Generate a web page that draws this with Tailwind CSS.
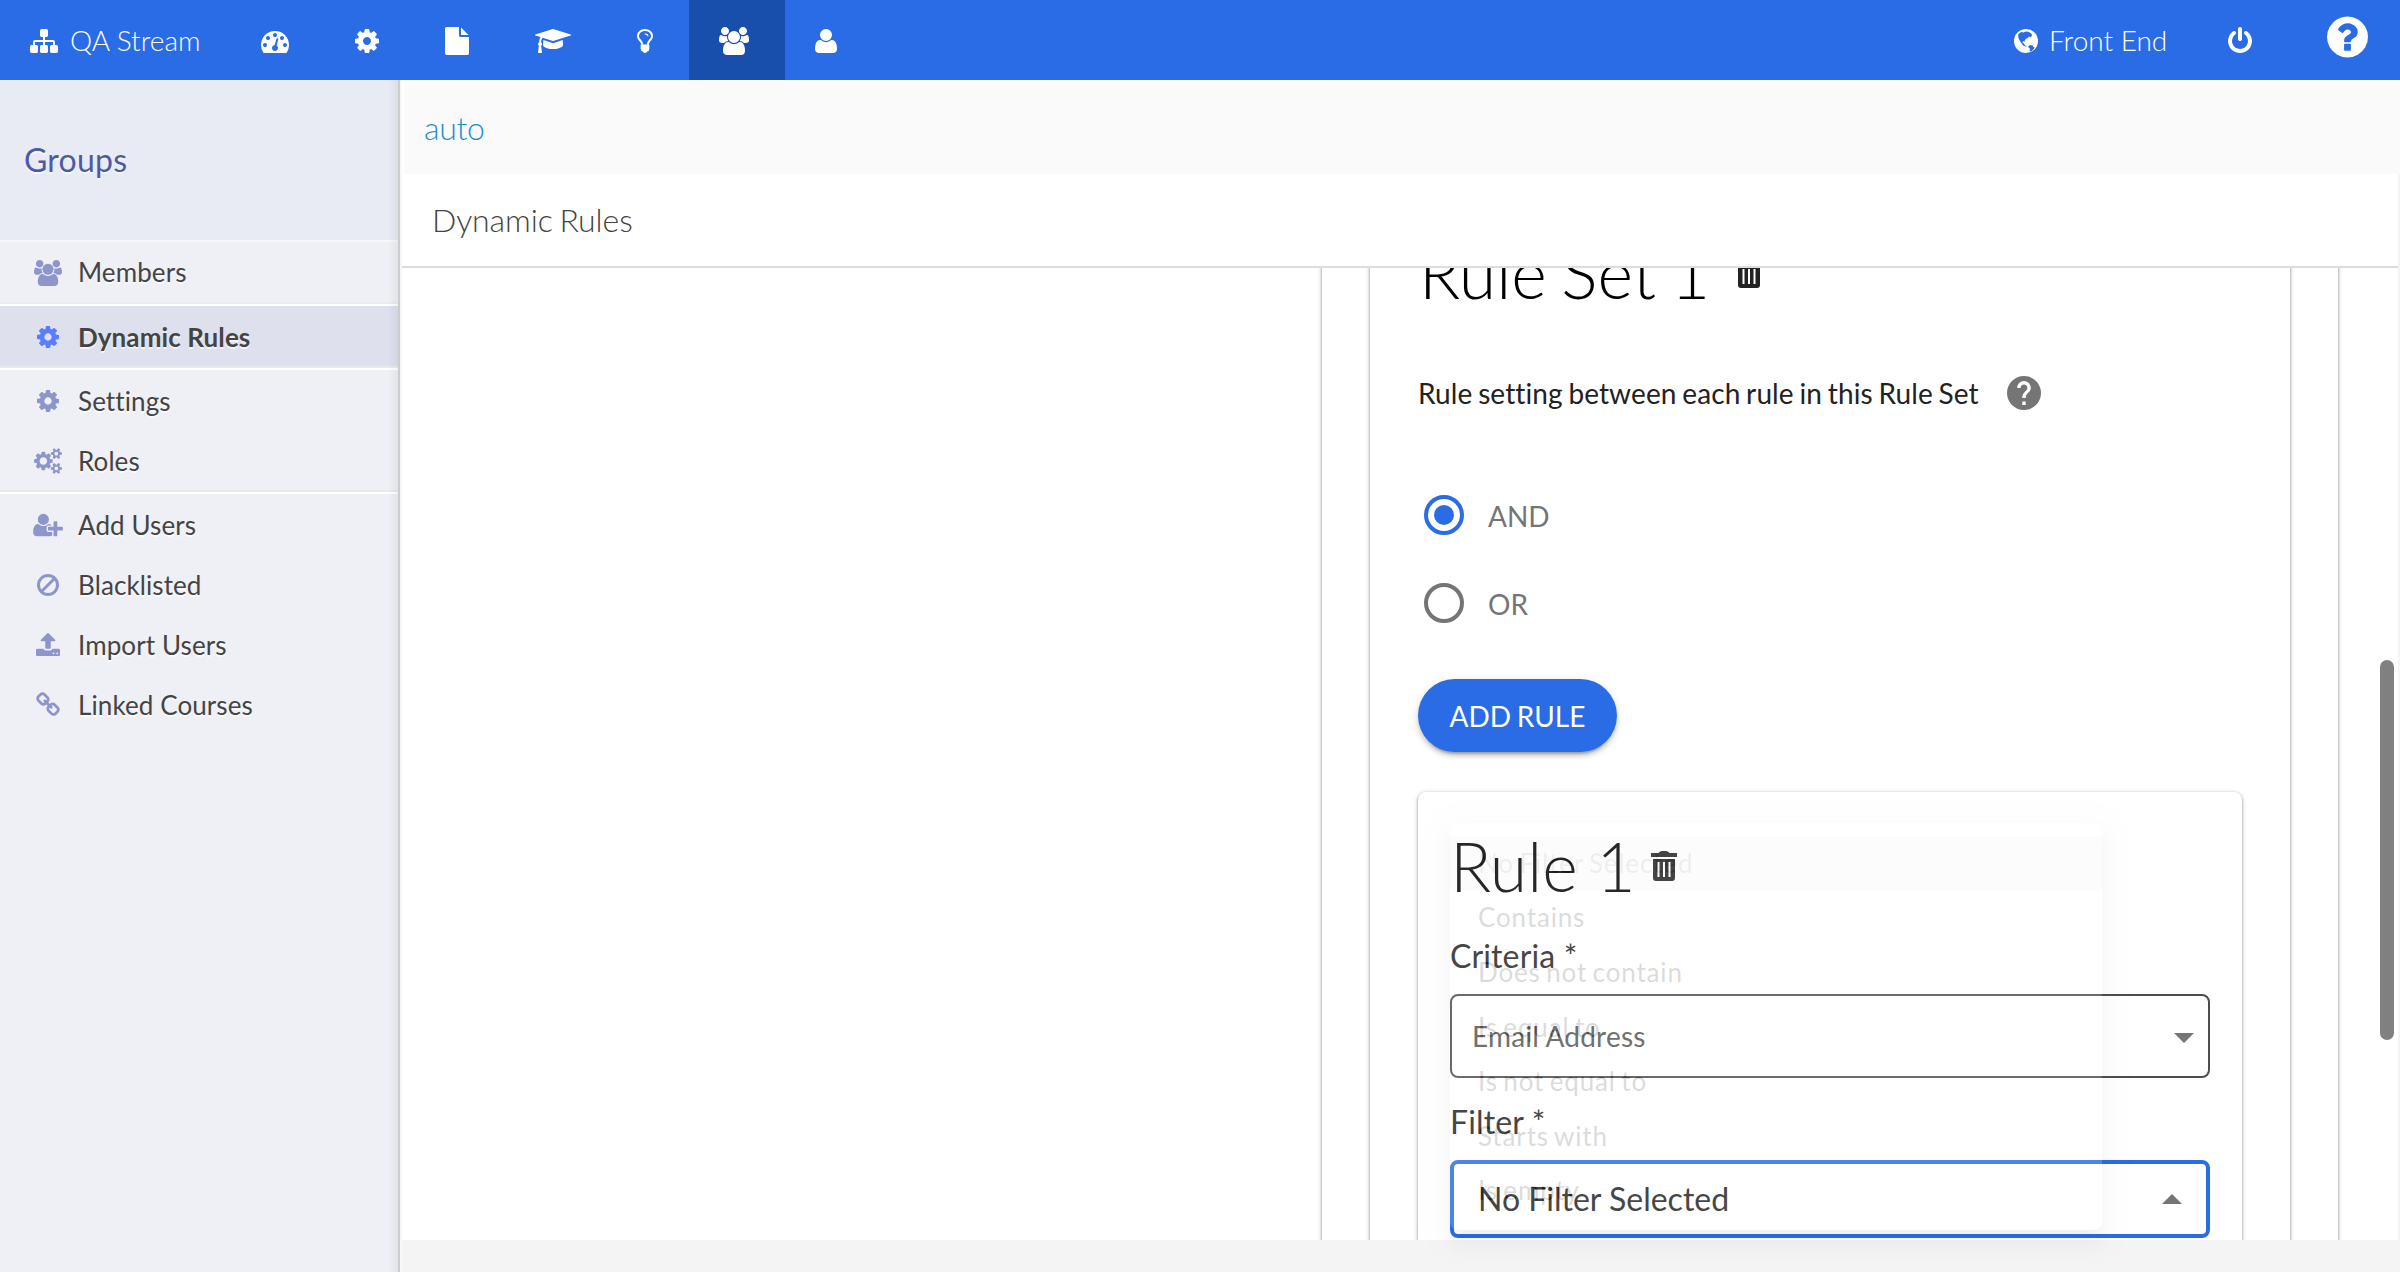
<!DOCTYPE html>
<html lang="en">
<head>
<meta charset="utf-8">
<title>Dynamic Rules</title>
<script src="https://cdn.jsdelivr.net/npm/@tailwindcss/browser@4"></script>
</head>
<body class="w-[2400px] h-[1272px] overflow-hidden bg-[#f4f4f4] font-['Lato',sans-serif] text-[#444] [font-variant-ligatures:none]">
<svg class="hidden">
  <symbol id="cog" viewBox="128 0 1536 1792"><path d="M1152 896q0-106-75-181t-181-75-181 75-75 181 75 181 181 75 181-75 75-181zm512-109v222q0 12-8 23t-20 13l-185 28q-19 54-39 91 35 50 107 138 10 12 10 25t-9 23q-27 37-99 108t-94 71q-12 0-26-9l-138-108q-44 23-91 38-16 136-29 186-7 28-36 28h-222q-14 0-24.500-8.500t-11.500-21.500l-28-184q-49-16-90-37l-141 107q-10 9-25 9-14 0-25-11-126-114-165-168-7-10-7-23 0-12 8-23 15-21 51-66.500t54-70.500q-27-50-41-99l-183-27q-13-2-21-12.500t-8-23.500v-222q0-12 8-23t19-13l186-28q14-46 39-92-40-57-107-138-10-12-10-24 0-10 9-23 26-36 98.500-107.500t94.500-71.500q13 0 26 10l138 107q44-23 91-38 16-136 29-186 7-28 36-28h222q14 0 24.500 8.500t11.500 21.500l28 184q49 16 90 37l142-107q9-9 24-9 13 0 25 10 129 119 165 170 7 8 7 22 0 12-8 23-15 21-51 66.500t-54 70.500q26 50 41 98l183 28q13 2 21 12.500t8 23.500z"/></symbol>
  <symbol id="users" viewBox="-64 0 1920 1792"><path d="M529 896q-162 5-265 128h-134q-82 0-138-40.500t-56-118.500q0-353 124-353 6 0 43.500 21t97.500 42.500 119 21.500q67 0 133-23-5 37-5 66 0 139 81 256zm1071 637q0 120-73 189.500t-194 69.500h-874q-121 0-194-69.500t-73-189.500q0-53 3.500-103.500t14-109 26.500-108.500 43-97.500 62-81 85.500-53.500 111.500-20q10 0 43 21.500t73 48 107 48 135 21.500 135-21.500 107-48 73-48 43-21.500q61 0 111.500 20t85.500 53.500 62 81 43 97.500 26.500 108.500 14 109 3.500 103.500zm-1024-1277q0 106-75 181t-181 75-181-75-75-181 75-181 181-75 181 75 75 181zm704 384q0 159-112.500 271.500t-271.500 112.500-271.500-112.500-112.500-271.500 112.500-271.500 271.500-112.500 271.500 112.500 112.500 271.500zm576 225q0 78-56 118.500t-138 40.500h-134q-103-123-265-128 81-117 81-256 0-29-5-66 66 23 133 23 59 0 119-21.500t97.500-42.500 43.500-21q124 0 124 353zm-128-609q0 106-75 181t-181 75-181-75-75-181 75-181 181-75 181 75 75 181z"/></symbol>
</svg>

<div class="flex h-full flex-col">
  <!-- top bar -->
  <header class="flex h-20 shrink-0 items-center justify-between bg-[#2a6ce6] text-[28px] font-light text-white">
    <nav class="flex h-full items-stretch">
      <a class="flex w-[231px] items-center gap-3 pl-[30px] pt-[2px]">
        <svg class="h-7 w-7 fill-current" viewBox="0 0 1792 1792"><path d="M1792 1248v320q0 40-28 68t-68 28h-320q-40 0-68-28t-28-68v-320q0-40 28-68t68-28h96v-192h-512v192h96q40 0 68 28t28 68v320q0 40-28 68t-68 28h-320q-40 0-68-28t-28-68v-320q0-40 28-68t68-28h96v-192h-512v192h96q40 0 68 28t28 68v320q0 40-28 68t-68 28h-320q-40 0-68-28t-28-68v-320q0-40 28-68t68-28h96v-192q0-52 38-90t90-38h512v-192h-96q-40 0-68-28t-28-68v-320q0-40 28-68t68-28h320q40 0 68 28t28 68v320q0 40-28 68t-68 28h-96v192h512q52 0 90 38t38 90v192h96q40 0 68 28t28 68z"/></svg>
        <span class="-mt-[3px] whitespace-nowrap">QA Stream</span>
      </a>
      <a class="flex items-center pl-[30px] pr-9 pt-[2px]"><svg class="h-7 w-7 fill-current" viewBox="0 0 1792 1792"><path d="M384 1152q0-53-37.500-90.500t-90.500-37.500-90.500 37.500-37.500 90.500 37.500 90.500 90.500 37.500 90.500-37.500 37.500-90.500zm192-448q0-53-37.500-90.500t-90.500-37.500-90.500 37.500-37.500 90.500 37.500 90.500 90.500 37.500 90.500-37.500 37.500-90.500zm428 481l101-382q6-26-7.500-48.500t-38.500-29.500-48 6.500-30 39.500l-101 382q-60 5-107 43.500t-63 98.500q-20 77 20 146t117 89 146-20 89-117q16-60-6-117t-72-91zm660-33q0-53-37.500-90.500t-90.500-37.500-90.500 37.500-37.500 90.500 37.500 90.500 90.500 37.500 90.500-37.500 37.500-90.500zm-640-640q0-53-37.500-90.500t-90.500-37.500-90.500 37.500-37.500 90.500 37.500 90.500 90.500 37.500 90.500-37.500 37.500-90.500zm448 192q0-53-37.500-90.500t-90.500-37.500-90.500 37.500-37.500 90.500 37.500 90.500 90.500 37.500 90.500-37.500 37.500-90.500zm320 448q0 261-141 483-19 29-54 29h-1402q-35 0-54-29-141-221-141-483 0-182 71-348t191-286 286-191 348-71 348 71 286 191 191 286 71 348z"/></svg></a>
      <a class="flex items-center pl-[30px] pr-9 pt-[2px]"><svg class="h-7 w-6 fill-current"><use href="#cog"/></svg></a>
      <a class="flex items-center pl-[30px] pr-9 pt-[2px]"><svg class="h-7 w-6 fill-current" viewBox="128 0 1536 1792"><path d="M1152 512v-472q22 14 36 28l408 408q14 14 28 36h-472zm-128 32q0 40 28 68t68 28h544v1056q0 40-28 68t-68 28h-1344q-40 0-68-28t-28-68v-1600q0-40 28-68t68-28h800v544z"/></svg></a>
      <a class="flex items-center pl-[30px] pr-9 pt-[2px]"><svg class="h-7 w-9 fill-current" viewBox="0 0 2304 1792"><path d="M1774 836l18 316q4 69-82 128t-235 93.500-323 34.500-323-34.500-235-93.500-82-128l18-316 574 181q22 7 48 7t48-7zm530-324q0 23-22 31l-1120 352q-4 1-10 1t-10-1l-652-206q-43 34-71 111.500t-34 178.500q63 36 63 109 0 69-58 107l58 433q2 14-8 25-9 11-24 11h-192q-15 0-24-11-10-11-8-25l58-433q-58-38-58-107 0-73 65-111 11-207 98-330l-333-104q-22-8-22-31t22-31l1120-352q4-1 10-1t10 1l1120 352q22 8 22 31z"/></svg></a>
      <a class="flex items-center pl-[30px] pr-9 pt-[2px]"><svg class="h-7 w-4 fill-current" viewBox="384 0 1024 1792"><path d="M1120 576q0 13-9.500 22.500t-22.500 9.500-22.500-9.500-9.500-22.500q0-46-54-71t-106-25q-13 0-22.500-9.500t-9.500-22.500 9.500-22.500 22.500-9.500q50 0 99.500 16t87 54 37.500 90zm160 0q0-72-34.500-134t-90-101.500-123-62-136.500-22.500-136.500 22.500-123 62-90 101.500-34.500 134q0 101 68 180 10 11 30.500 33t30.500 33q128 153 141 298h228q13-145 141-298 10-11 30.500-33t30.500-33q68-79 68-180zm128 0q0 155-103 268-45 49-74.500 87t-59.500 95.500-34 107.500q47 28 47 82 0 37-25 64 25 27 25 64 0 52-45 81 13 23 13 47 0 46-31.500 71t-77.500 25q-20 44-60 70t-87 26-87-26-60-70q-46 0-77.500-25t-31.500-71q0-24 13-47-45-29-45-81 0-37 25-64-25-27-25-64 0-54 47-82-4-50-34-107.500t-59.500-95.500-74.500-87q-103-113-103-268 0-99 44.500-184.500t117-142 164-89 186.500-32.500 186.500 32.500 164 89 117 142 44.500 184.500z"/></svg></a>
      <a class="flex items-center bg-[#184eac] pl-[30px] pr-9 pt-[2px]"><svg class="h-7 w-[30px] fill-current"><use href="#users"/></svg></a>
      <a class="flex items-center pl-[30px] pr-9 pt-[2px]"><svg class="h-7 w-[22px] fill-current" viewBox="192 0 1408 1792"><path d="M1600 1405q0 120-73 189.500t-194 69.500h-874q-121 0-194-69.500t-73-189.500q0-53 3.500-103.500t14-109 26.500-108.500 43-97.500 62-81 85.500-53.500 111.500-20q9 0 42 21.500t74.500 48 108 48 133.500 21.500 133.500-21.500 108-48 74.500-48 42-21.500q61 0 111.500 20t85.500 53.500 62 81 43 97.500 26.500 108.500 14 109 3.500 103.500zm-320-893q0 159-112.500 271.500t-271.500 112.500-271.500-112.500-112.500-271.500 112.500-271.500 271.500-112.500 271.500 112.500 112.500 271.500z"/></svg></a>
    </nav>
    <div class="flex items-center pr-8">
      <a class="flex w-[214px] items-center gap-[11px] pt-[2px]">
        <svg class="h-6 w-6 shrink-0" viewBox="0 0 24 24"><circle cx="12" cy="12" r="12" fill="#fff"/><path fill="#2a6ce6" d="M4.300 5.200 7 3l2.400.4 2-1 3.200.4 2.600 1.600 1 1.800-1.600 2-1.800-.8-.8 1.600-2 .8-1.400 1.600.4 1.400-1.800-.6-.8 1.400 1.600 1 1 1.800 1.600.6-.4.800-2.800-1-1.800-2.200-1.600-2.600L4.400 9zM14.300 17l1.900-1 2.600.6.2 1.200 1.600.4-1 2-2.600 2.200-1.400-.4.400-2.200-1.500-1.200z"/></svg>
        <span class="-mt-[3px] whitespace-nowrap">Front End</span>
      </a>
      <a class="w-[99px] pt-[2px]"><svg class="h-7 w-6 fill-current" viewBox="128 0 1536 1792"><path d="M1664 896q0 156-61 298t-164 245-245 164-298 61-298-61-245-164-164-245-61-298q0-182 80.500-343t226.500-270q43-32 95.500-25t83.500 50q32 42 24.500 94.500t-49.500 84.500q-98 74-151.500 181t-53.500 228q0 104 40.500 198.500t109.500 163.500 163.500 109.500 198.500 40.500 198.500-40.500 163.500-109.500 109.500-163.500 40.500-198.500q0-121-53.500-228t-151.500-181q-42-32-49.500-84.500t24.500-94.500q31-43 84-50t95 25q146 109 226.500 270t80.500 343zm-640-768v640q0 52-38 90t-90 38-90-38-38-90v-640q0-52 38-90t90-38 90 38 38 90z"/></svg></a>
      <a class="-mt-[7px]"><svg class="h-12 w-[41px] fill-current" viewBox="128 0 1536 1792"><path d="M1024 1376v-192q0-14-9-23t-23-9h-192q-14 0-23 9t-9 23v192q0 14 9 23t23 9h192q14 0 23-9t9-23zm256-672q0-88-55.500-163t-138.500-116-170-41q-243 0-371 213-15 24 8 42l132 100q7 6 19 6 16 0 25-12 53-68 86-92 34-24 86-24 48 0 85.500 26t37.500 59q0 38-20 61t-68 45q-63 28-115.500 86.500t-52.500 125.500v36q0 14 9 23t23 9h192q14 0 23-9t9-23q0-19 21.500-49.500t54.500-49.500q32-18 49-28.500t46-35 44.500-48 28-60.500 12.500-81zm384 192q0 209-103 385.500t-279.500 279.500-385.500 103-385.500-103-279.500-279.500-103-385.500 103-385.500 279.500-279.500 385.500-103 385.500 103 279.500 279.500 103 385.500z"/></svg></a>
    </div>
  </header>

  <div class="flex min-h-0 flex-1">
    <!-- sidebar -->
    <aside class="relative w-[400px] shrink-0 border-r-2 border-[#ccc] bg-[#eff0f5] text-[26px] tracking-[0.1px] [text-shadow:0_2px_0_#ffffffa0]">
      <div class="flex h-[162px] items-center border-b-2 border-[#f6f7fb] bg-[#e8ebf4] pl-6 text-[32px] tracking-[0.25px] text-[#4c5aa5]">Groups</div>
      <ul>
        <li class="flex h-[62px] items-center border-b-2 border-[#ebebee] pt-px"><span class="flex w-[78px] justify-center pl-[18px]"><svg class="h-[26px] w-7 fill-[#8d96ca]"><use href="#users"/></svg></span>Members</li>
        <li class="flex h-16 items-center border-y-2 border-t-white border-b-[#eaeaec] bg-[#dee1ed] pt-[2px] font-bold"><span class="flex w-[78px] justify-center pl-[18px]"><svg class="h-[26px] w-[22px] fill-[#5a7cff]"><use href="#cog"/></svg></span>Dynamic Rules</li>
        <li class="flex h-[62px] items-center border-t-2 border-white pt-[2px]"><span class="flex w-[78px] justify-center pl-[18px]"><svg class="h-[26px] w-[22px] fill-[#8d96ca]"><use href="#cog"/></svg></span>Settings</li>
        <li class="flex h-[62px] items-center border-b-2 border-[#eaeaec] pt-[2px]"><span class="flex w-[78px] justify-center pl-[18px]"><svg class="h-[26px] w-7 fill-[#8d96ca]" viewBox="-64 0 1920 1792"><path d="M832 896q0-106-75-181t-181-75-181 75-75 181 75 181 181 75 181-75 75-181zm768 512q0-52-38-90t-90-38-90 38-38 90q0 53 37.500 90.500t90.500 37.500 90.500-37.500 37.500-90.500zm0-1024q0-52-38-90t-90-38-90 38-38 90q0 53 37.500 90.500t90.500 37.500 90.500-37.500 37.500-90.500zm-384 421v185q0 10-7 19.500t-16 10.500l-155 24q-11 35-32 76 34 48 90 115 7 10 7 20 0 12-7 19-23 30-82.500 89.500t-78.500 59.500q-11 0-21-7l-115-90q-37 19-77 31-11 108-23 155-7 24-30 24h-186q-11 0-20-7.500t-10-17.500l-23-153q-34-10-75-31l-118 89q-7 7-20 7-11 0-21-8-144-133-144-160 0-9 7-19 10-14 41-53t47-61q-23-44-35-82l-152-24q-10-1-17-9.500t-7-19.500v-185q0-10 7-19.500t16-10.500l155-24q11-35 32-76-34-48-90-115-7-11-7-20 0-12 7-20 22-30 82-89t79-59q11 0 21 7l115 90q34-18 77-32 11-108 23-154 7-24 30-24h186q11 0 20 7.500t10 17.500l23 153q34 10 75 31l118-89q8-7 20-7 11 0 21 8 144 133 144 160 0 9-7 19-12 16-42 54t-45 60q23 48 34 82l152 23q10 2 17 10.500t7 19.500zm640 533v140q0 16-149 31-12 27-30 52 51 113 51 138 0 4-4 7-122 71-124 71-8 0-46-47t-52-68q-20 2-30 2t-30-2q-14 21-52 68t-46 47q-2 0-124-71-4-3-4-7 0-25 51-138-18-25-30-52-149-15-149-31v-140q0-16 149-31 13-29 30-52-51-113-51-138 0-4 4-7 4-2 35-20t59-34 30-16q8 0 46 46.500t52 67.500q20-2 30-2t30 2q51-71 92-112l6-2q4 0 124 70 4 3 4 7 0 25-51 138 17 23 30 52 149 15 149 31zm0-1024v140q0 16-149 31-12 27-30 52 51 113 51 138 0 4-4 7-122 71-124 71-8 0-46-47t-52-68q-20 2-30 2t-30-2q-14 21-52 68t-46 47q-2 0-124-71-4-3-4-7 0-25 51-138-18-25-30-52-149-15-149-31v-140q0-16 149-31 13-29 30-52-51-113-51-138 0-4 4-7 4-2 35-20t59-34 30-16q8 0 46 46.500t52 67.500q20-2 30-2t30 2q51-71 92-112l6-2q4 0 124 70 4 3 4 7 0 25-51 138 17 23 30 52 149 15 149 31z"/></svg></span>Roles</li>
        <li class="flex h-[62px] items-center border-t-2 border-white pt-[2px]"><span class="flex w-[78px] justify-center pl-[18px]"><svg class="h-[26px] w-[30px] fill-[#8d96ca]" viewBox="0 0 2048 1792"><path d="M704 896q-159 0-271.500-112.500t-112.500-271.500 112.500-271.500 271.500-112.500 271.500 112.500 112.500 271.500-112.500 271.500-271.500 112.500zm960 128h352q13 0 22.500 9.500t9.500 22.500v192q0 13-9.500 22.500t-22.500 9.500h-352v352q0 13-9.500 22.500t-22.500 9.500h-192q-13 0-22.500-9.500t-9.500-22.500v-352h-352q-13 0-22.500-9.500t-9.500-22.500v-192q0-13 9.500-22.500t22.500-9.500h352v-352q0-13 9.500-22.500t22.500-9.500h192q13 0 22.500 9.500t9.500 22.500v352zm-736 224q0 52 38 90t90 38h256v238q-68 50-171 50h-874q-121 0-194-69t-73-190q0-53 3.500-103.500t14-109 26.500-108.500 43-97.500 62-81 85.500-53.500 111.500-20q19 0 39 17 79 61 154.500 91.500t164.500 30.500 164.500-30.500 154.500-91.500q20-17 39-17 132 0 217 96h-223q-52 0-90 38t-38 90v192z"/></svg></span>Add Users</li>
        <li class="flex h-[60px] items-center pt-[2px]"><span class="flex w-[78px] justify-center pl-[18px]"><svg class="h-[22px] w-[22px] fill-none stroke-[#8d96ca] stroke-3" viewBox="0 0 22 22"><circle cx="11" cy="11" r="9.500"/><path d="M17.500 4.500l-13 13"/></svg></span>Blacklisted</li>
        <li class="flex h-[60px] items-center pt-[2px]"><span class="flex w-[78px] justify-center pl-[18px]"><svg class="h-[26px] w-6 fill-[#8d96ca]" viewBox="64 0 1664 1792"><path d="M1344 1472q0-26-19-45t-45-19-45 19-19 45 19 45 45 19 45-19 19-45zm256 0q0-26-19-45t-45-19-45 19-19 45 19 45 45 19 45-19 19-45zm128-224v320q0 40-28 68t-68 28h-1472q-40 0-68-28t-28-68v-320q0-40 28-68t68-28h427q21 56 70.500 92t110.500 36h256q61 0 110.500-36t70.500-92h427q40 0 68 28t28 68zm-325-648q-17 40-59 40h-256v448q0 26-19 45t-45 19h-256q-26 0-45-19t-19-45v-448h-256q-42 0-59-40-17-39 14-69l448-448q18-19 45-19t45 19l448 448q31 30 14 69z"/></svg></span>Import Users</li>
        <li class="flex h-[60px] items-center pt-[2px]"><span class="flex w-[78px] justify-center pl-[18px]"><svg class="h-[26px] w-6 fill-[#8d96ca]" viewBox="64 0 1664 1792"><path d="M1520 1216q0-40-28-68l-208-208q-28-28-68-28-42 0-72 32 3 3 19 18.500t21.500 21.500 15 19 13 25.500 3.500 27.500q0 40-28 68t-68 28q-15 0-27.500-3.500t-25.500-13-19-15-21.500-21.500-18.500-19q-33 31-33 73 0 40 28 68l206 207q27 27 68 27 40 0 68-26l147-146q28-28 28-67zm-703-705q0-40-28-68l-206-207q-28-28-68-28-39 0-68 27l-147 146q-28 28-28 67 0 40 28 68l208 208q27 27 68 27 42 0 72-31-3-3-19-18.500t-21.500-21.500-15-19-13-25.500-3.500-27.500q0-40 28-68t68-28q15 0 27.500 3.500t25.500 13 19 15 21.500 21.500 18.500 19q33-31 33-73zm895 705q0 120-85 203l-147 146q-83 83-203 83-121 0-204-85l-206-207q-83-83-83-203 0-123 88-209l-88-88q-86 88-208 88-120 0-204-84l-208-208q-84-84-84-204t85-203l147-146q83-83 203-83 121 0 204 85l206 207q83 83 83 203 0 123-88 209l88 88q86-88 208-88 120 0 204 84l208 208q84 84 84 204z"/></svg></span>Linked Courses</li>
      </ul>
      <div class="absolute inset-y-0 right-0 w-2.5 bg-gradient-to-r from-transparent to-black/5"></div>
    </aside>

    <!-- main column -->
    <main class="flex min-w-0 flex-1 flex-col border-l-2 border-[#f7f7f7]">
      <div class="flex h-[94px] shrink-0 items-center border-l-2 border-white bg-[#fafafa] pl-5 pt-[2px] text-[32px] font-light tracking-[-0.3px] text-[#1e8fcb]">auto</div>
      <div class="mr-[2px] flex h-[94px] shrink-0 items-center border-b-2 border-[#ddd] bg-white pl-[30px] text-[32px] font-light tracking-[-0.1px] [word-spacing:-1.8px]">Dynamic Rules</div>
      <div class="mr-[2px] h-[972px] overflow-hidden bg-white pl-[920px] pr-[60px]">
        <section class="h-[1100px] px-12 shadow-[0_1px_1px_#00000024,0_1px_6px_#0000001f,0_1px_3px_#00000060]">
          <section class="h-[1100px] px-12 shadow-[0_1px_1px_#00000024,0_1px_6px_#0000001f,0_1px_3px_#00000060]">
            <div class="-mt-[35px] flex h-20 items-center pl-px">
              <h1 class="w-[317px] whitespace-nowrap text-[68px] font-light leading-[80px] text-black [word-spacing:-3.8px]">Rule Set 1</h1>
              <svg class="-mt-px h-[30px] w-[26px] fill-[#222]" viewBox="0 0 26 30"><path fill-rule="evenodd" d="M0 2h7.500Q9 0 11 0h4q2 0 3.500 2H26v4H0zM2 8h22v19q0 3-3 3H5q-3 0-3-3zm4.500 3v15h2V11zm5.500 0v15h2V11zm5.500 0v15h2V11z"/></svg>
            </div>
            <div class="mt-[60px] flex h-10 items-center text-[28px] tracking-[0.1px] text-[#222] [word-spacing:-1.5px]"><span class="w-[589px] whitespace-nowrap">Rule setting between each rule in this Rule Set</span>
              <svg class="h-[34px] w-[34px]" viewBox="2 2 20 20"><path fill="#757575" d="M12 2C6.480 2 2 6.480 2 12s4.480 10 10 10 10-4.480 10-10S17.520 2 12 2zm1 17h-2v-2h2v2zm2.070-7.750l-.9.920C13.450 12.900 13 13.500 13 15h-2v-.5c0-1.100.45-2.100 1.170-2.830l1.240-1.260c.37-.36.590-.86.590-1.410 0-1.100-.9-2-2-2s-2 .9-2 2H8c0-2.210 1.790-4 4-4s4 1.790 4 4c0 .88-.36 1.680-.93 2.250z"/></svg>
            </div>
            <div class="mt-[82px] flex h-10 items-center gap-6 pl-[6px] text-[28px] text-[#757575]"><span class="flex h-10 w-10 items-center justify-center rounded-full border-4 border-[#2a6ce6]"><span class="h-5 w-5 rounded-full bg-[#2a6ce6]"></span></span><span class="pt-px">AND</span></div>
            <div class="mt-12 flex h-10 items-center gap-6 pl-[6px] text-[28px] text-[#757575]"><span class="h-10 w-10 rounded-full border-4 border-[#757575]"></span><span class="pt-px">OR</span></div>
            <button class="mt-14 flex h-[73px] w-[199px] items-center justify-center rounded-full bg-[#2a6ce6] text-[28px] text-white shadow-[0_6px_2px_-4px_#0003,0_4px_4px_#00000024,0_2px_10px_#0000001f] [word-spacing:-1.5px]">ADD RULE</button>
            <section class="mt-10 h-[600px] rounded-lg px-8 pt-[34px] shadow-[0_1px_1px_#00000024,0_1px_6px_#0000001f,0_1px_3px_#00000060]">
              <div class="flex h-20 items-center">
                <h2 class="w-[201px] whitespace-nowrap text-[68px] font-light leading-[80px] text-black">Rule 1</h2>
                <svg class="h-[30px] w-[26px] fill-[#222]" viewBox="0 0 26 30"><path fill-rule="evenodd" d="M0 2h7.500Q9 0 11 0h4q2 0 3.500 2H26v4H0zM2 8h22v19q0 3-3 3H5q-3 0-3-3zm4.500 3v15h2V11zm5.500 0v15h2V11zm5.500 0v15h2V11z"/></svg>
              </div>
              <div class="mt-[30px] h-10 text-[32px] leading-10 tracking-[0.15px] text-[#222]">Criteria *</div>
              <div class="mt-[18px] flex h-[84px] items-center justify-between rounded-lg border-2 border-[#4d4d4d] pl-5 pr-[14px] text-[28px] tracking-[0.2px] text-[#555]">Email Address<svg class="mt-1 h-[10px] w-5 fill-[#757575]" viewBox="0 0 20 10"><path d="M0 0h20L10 10z"/></svg></div>
              <div class="mt-6 h-10 text-[32px] leading-10 tracking-[0.15px] text-[#222]">Filter *</div>
              <div class="mt-[18px] flex h-[78px] items-center justify-between rounded-lg border-4 border-[#2a6ce6] pl-6 pr-6 text-[32px] text-[#222]">No Filter Selected<svg class="h-[10px] w-5 fill-[#757575]" viewBox="0 0 20 10"><path d="M0 10h20L10 0z"/></svg></div>
            </section>
          </section>
        </section>
      </div>
    </main>
  </div>
</div>

<!-- filter options, fading in -->
<ul class="absolute left-[1450px] top-[823px] h-[407px] w-[652px] rounded-lg bg-white pt-[13px] text-[26px] tracking-[0.85px] text-black/87 opacity-16 shadow-[0_10px_10px_-6px_#0003,0_16px_20px_2px_#00000024,0_6px_28px_4px_#0000001f] [word-spacing:-2px]">
  <li class="flex h-[54.6px] items-center bg-black/5 pl-7 text-black/38">No Filter Selected</li>
  <li class="flex h-[54.6px] items-center pl-7">Contains</li>
  <li class="flex h-[54.6px] items-center pl-7">Does not contain</li>
  <li class="flex h-[54.6px] items-center pl-7">Is equal to</li>
  <li class="flex h-[54.6px] items-center pl-7">Is not equal to</li>
  <li class="flex h-[54.6px] items-center pl-7">Starts with</li>
  <li class="flex h-[54.6px] items-center pl-7">Is empty</li>
</ul>
<!-- scrollbar thumb -->
<div class="absolute left-[2380px] top-[660px] h-[380px] w-[14px] rounded-full bg-[#808080]"></div>
</body>
</html>
